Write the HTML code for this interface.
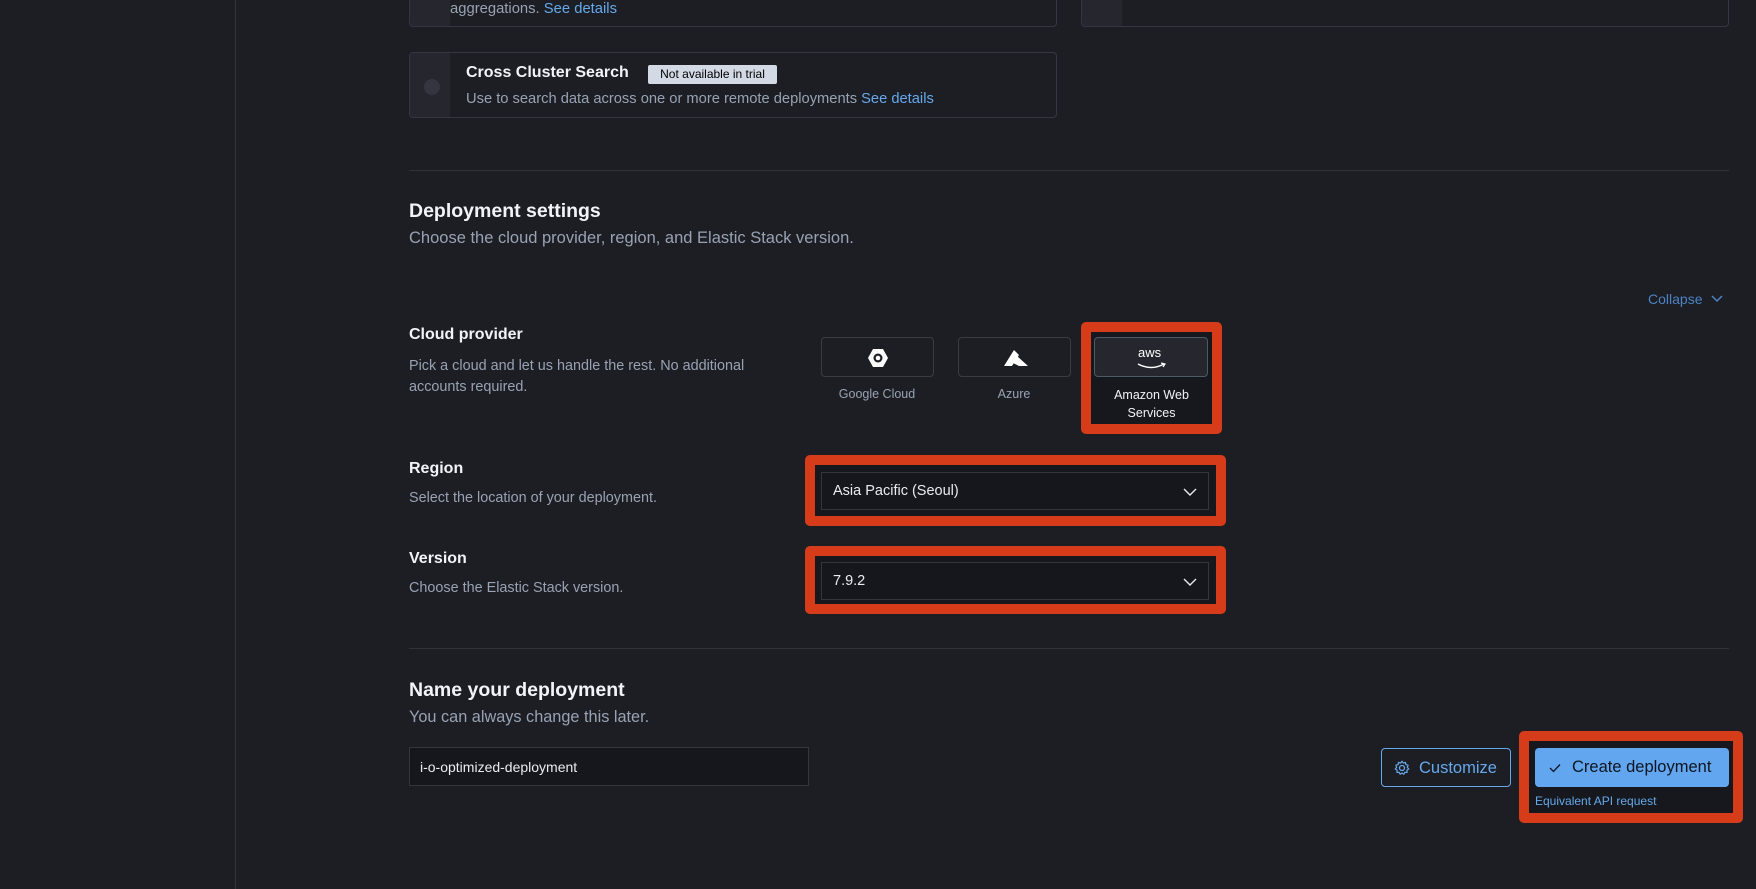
<!DOCTYPE html>
<html><head><meta charset="utf-8"><style>
*{box-sizing:border-box;margin:0;padding:0}
body{width:1756px;height:889px;background:#1d1e24;font-family:"Liberation Sans",sans-serif;position:relative;overflow:hidden;color:#dfe5ef}
.a{position:absolute;white-space:nowrap}
.card{position:absolute;border:1px solid #343741;border-radius:4px;background:#1d1e24;overflow:hidden}
.strip{position:absolute;left:0;top:0;bottom:0;width:40px;background:#25262e}
.g{color:#98a2b3}
.l{color:#64a9ec}
.h{font-weight:bold;font-size:16px;color:#f0f3f8}
.d{font-size:14.4px;color:#98a2b3}
.red{position:absolute;border:10px solid #d63c1a;border-radius:5px;background:#17181d}
.sel{position:absolute;background:#16171c;border:1px solid #34363e;font-size:14.5px;color:#e8ecf2}
.pb{position:absolute;border:1px solid #3a3c45;border-radius:4px;background:#1d1e24}
.pl{position:absolute;font-size:12.5px;color:#98a2b3;text-align:center;width:140px}
</style></head><body>
<div class="a" style="left:235px;top:0;width:1px;height:889px;background:#30323a"></div>

<div class="card" style="left:409px;top:-20px;width:648px;height:47px"><div class="strip"></div>
<div class="a g" style="left:40px;top:20px;font-size:14.8px">aggregations. <span class="l">See details</span></div></div>
<div class="card" style="left:1081px;top:-20px;width:648px;height:47px"><div class="strip"></div></div>

<div class="card" style="left:409px;top:52px;width:648px;height:66px"><div class="strip"></div>
<div class="a" style="left:14px;top:26px;width:16px;height:16px;border-radius:50%;background:#34363f"></div>
<div class="a" style="left:56px;top:11px;font-size:16px;font-weight:bold;color:#f0f3f8">Cross Cluster Search</div>
<div class="a" style="left:238px;top:12px;height:19px;width:129px;background:#d3dae6;color:#000;font-size:12px;line-height:19px;text-align:center;border-radius:2px">Not available in trial</div>
<div class="a g" style="left:56px;top:38px;font-size:14.7px">Use to search data across one or more remote deployments <span class="l">See details</span></div></div>

<div class="a" style="left:409px;top:170px;width:1320px;height:1px;background:#30323a"></div>
<div class="a" style="left:409px;top:200px;font-size:19.5px;font-weight:bold;color:#f0f3f8">Deployment settings</div>
<div class="a g" style="left:409px;top:229px;font-size:16.5px">Choose the cloud provider, region, and Elastic Stack version.</div>
<div class="a" style="left:1648px;top:291px;font-size:14px;color:#4a84c4">Collapse <svg width="14" height="10" style="margin-left:4px" viewBox="0 0 14 10"><path d="M2 2l5 5 5-5" fill="none" stroke="#4a84c4" stroke-width="1.5"/></svg></div>

<div class="a h" style="left:409px;top:326px">Cloud provider</div>
<div class="a d" style="left:409px;top:356px;line-height:21px">Pick a cloud and let us handle the rest. No additional<br>accounts required.</div>

<div class="pb" style="left:821px;top:337px;width:113px;height:40px">
<svg class="a" style="left:45px;top:9px" width="22" height="22" viewBox="0 0 22 22"><path d="M6 2h10l5 9-5 9H6l-5-9z" fill="#fff"/><circle cx="11" cy="11" r="4.5" fill="#1d1e24"/><circle cx="11" cy="11" r="2.3" fill="#fff"/></svg></div>
<div class="pl" style="left:807px;top:387px">Google Cloud</div>
<div class="pb" style="left:958px;top:337px;width:113px;height:40px">
<svg class="a" style="left:44px;top:11px" width="26" height="18" viewBox="0 0 26 18"><path d="M11 1l-10 16h8l7-11z" fill="#fff"/><path d="M14 7l-4 7 6 3h9z" fill="#fff"/></svg></div>
<div class="pl" style="left:944px;top:387px">Azure</div>

<div class="red" style="left:1081px;top:322px;width:141px;height:112px"></div>
<div class="pb" style="left:1094px;top:337px;width:114px;height:40px;background:#25262e;border-color:#4b5a66">
<div class="a" style="left:43px;top:7px;font-size:13px;color:#fff">aws</div>
<svg class="a" style="left:42px;top:24px" width="30" height="8" viewBox="0 0 30 8"><path d="M1 2q13 7 26 0" fill="none" stroke="#fff" stroke-width="1.4"/><path d="M24 1l4 1-2 3" fill="none" stroke="#fff" stroke-width="1.2"/></svg></div>
<div class="pl" style="left:1081px;top:386px;color:#f0f3f8;line-height:18px;white-space:normal;width:141px">Amazon Web<br>Services</div>

<div class="a h" style="left:409px;top:460px">Region</div>
<div class="a d" style="left:409px;top:490px">Select the location of your deployment.</div>
<div class="red" style="left:805px;top:455px;width:421px;height:71px"></div>
<div class="sel" style="left:821px;top:472px;width:388px;height:38px"><span class="a" style="left:11px;top:10px">Asia Pacific (Seoul)</span>
<svg class="a" style="left:361px;top:14px" width="14" height="10" viewBox="0 0 14 10"><path d="M1 2l6 6 6-6" fill="none" stroke="#e8ecf2" stroke-width="1.4"/></svg></div>

<div class="a h" style="left:409px;top:550px">Version</div>
<div class="a d" style="left:409px;top:580px">Choose the Elastic Stack version.</div>
<div class="red" style="left:805px;top:546px;width:421px;height:68px"></div>
<div class="sel" style="left:821px;top:562px;width:388px;height:38px"><span class="a" style="left:11px;top:10px">7.9.2</span>
<svg class="a" style="left:361px;top:14px" width="14" height="10" viewBox="0 0 14 10"><path d="M1 2l6 6 6-6" fill="none" stroke="#e8ecf2" stroke-width="1.4"/></svg></div>

<div class="a" style="left:409px;top:648px;width:1320px;height:1px;background:#30323a"></div>
<div class="a" style="left:409px;top:679px;font-size:19.5px;font-weight:bold;color:#f0f3f8">Name your deployment</div>
<div class="a g" style="left:409px;top:708px;font-size:16.3px">You can always change this later.</div>
<div class="sel" style="left:409px;top:747px;width:400px;height:39px"><span class="a" style="left:10px;top:11px;font-size:14px">i-o-optimized-deployment</span></div>

<div class="a" style="left:1381px;top:748px;width:130px;height:39px;border:1px solid #64a9ec;border-radius:4px;color:#64a9ec;font-size:16.5px">
<svg class="a" style="left:12px;top:11px" width="16" height="16" viewBox="0 0 16 16"><circle cx="8" cy="8" r="2.5" fill="none" stroke="#64a9ec" stroke-width="1.3"/><path d="M8 1.2l1.3 1.8 2.2-.6.4 2.2 2.2.6-.8 2.1 1.5 1.7-1.9 1.1.2 2.3-2.3-.1-1 2-1.8-1.3-1.8 1.3-1-2-2.3.1.2-2.3-1.9-1.1 1.5-1.7-.8-2.1 2.2-.6.4-2.2 2.2.6z" fill="none" stroke="#64a9ec" stroke-width="1.2" stroke-linejoin="round"/></svg>
<span class="a" style="left:37px;top:10px">Customize</span></div>

<div class="red" style="left:1519px;top:731px;width:224px;height:92px"></div>
<div class="a" style="left:1535px;top:748px;width:194px;height:39px;background:#61a6ee;border-radius:4px;color:#0e1520;font-size:16.5px">
<svg class="a" style="left:14px;top:15px" width="12" height="10" viewBox="0 0 12 10"><path d="M1 5l3.5 3.5L11 1.5" fill="none" stroke="#0e1520" stroke-width="1.3"/></svg>
<span class="a" style="left:37px;top:10px">Create deployment</span></div>
<div class="a" style="left:1535px;top:794px;font-size:12px;color:#64a9ec">Equivalent API request</div>
</body></html>
